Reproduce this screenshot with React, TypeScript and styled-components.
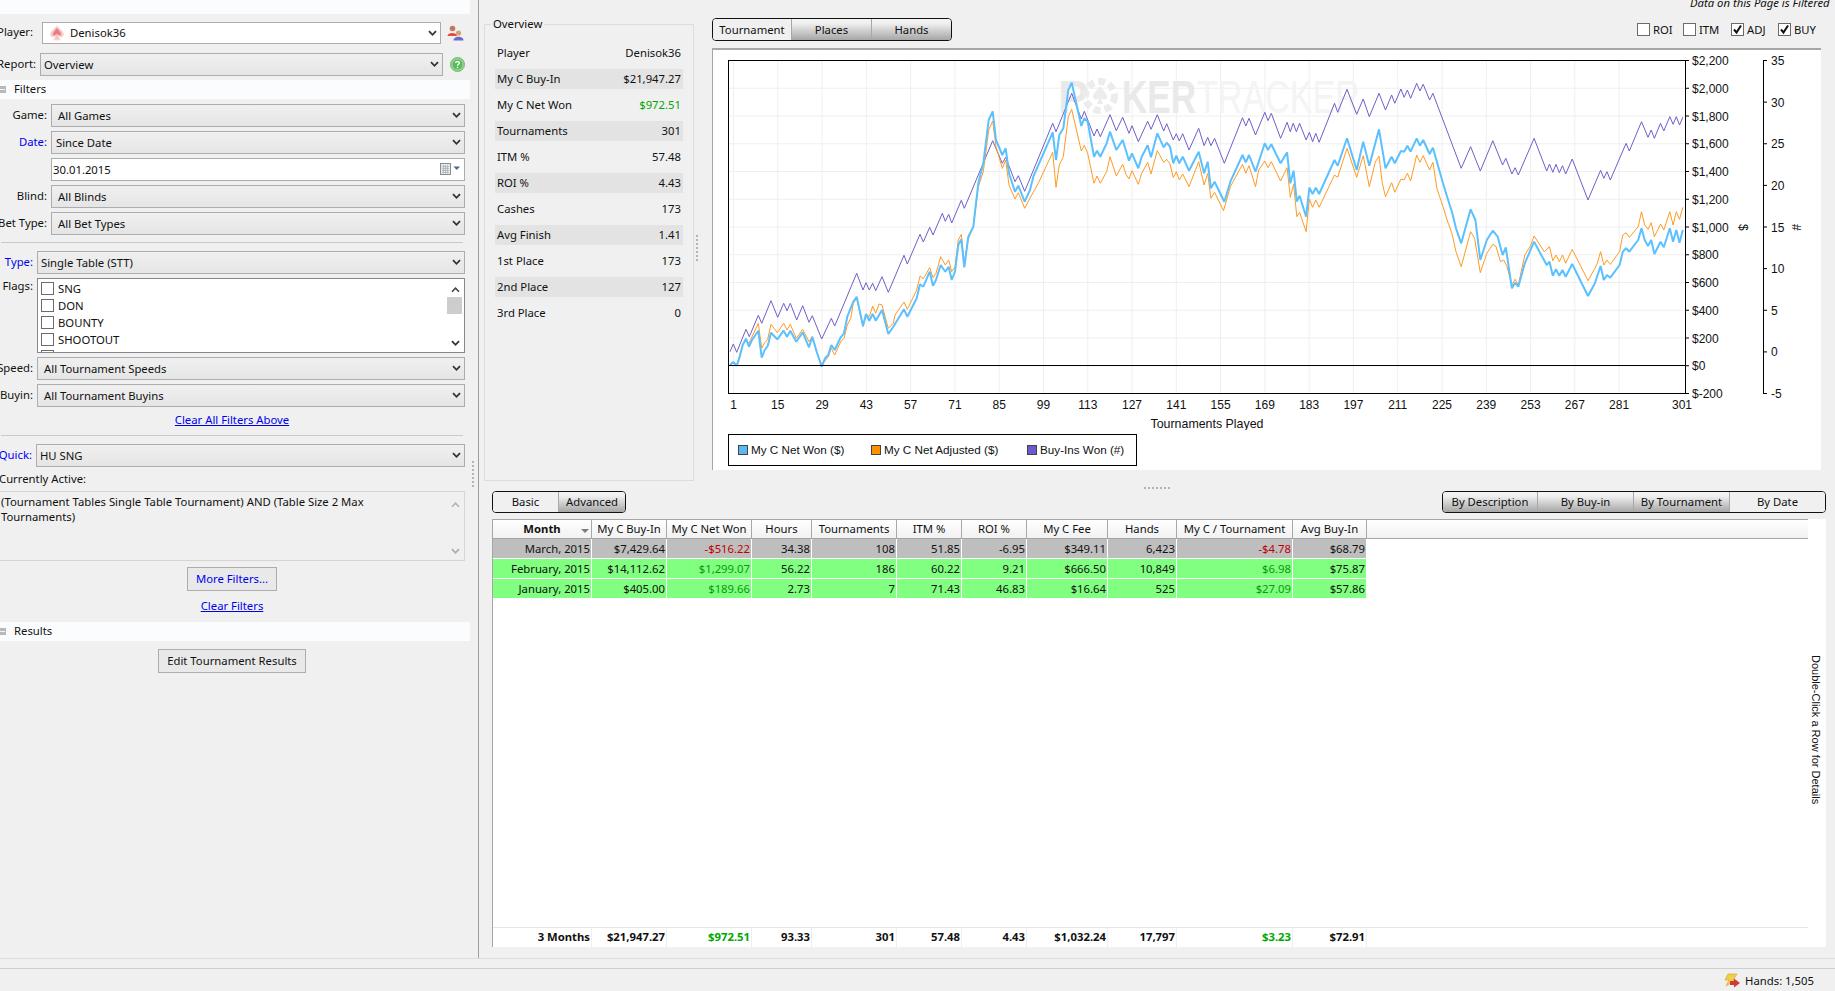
import React from 'react';
import styled, { createGlobalStyle } from 'styled-components';

const UI = '"Noto Sans", "Liberation Sans", sans-serif';
const CH = '"Liberation Sans", Arial, sans-serif';

const Global = createGlobalStyle`
  html, body { margin: 0; padding: 0; background: #f0f0f0; overflow: hidden; }
  * { box-sizing: border-box; }
`;

const Root = styled.div`
  width: 1835px; height: 991px; overflow: hidden; background: #f0f0f0; color: #111;
  font: 11.3px/14px ${UI}; display: flex; flex-direction: column;
`;
const Main = styled.div`display: flex; height: 958px;`;

/* ---------- left panel ---------- */
const Left = styled.aside`width: 470px; overflow: hidden; display: flex; flex-direction: column;`;
const TopStrip = styled.div`height: 14px; background: #fbfcfe;`;
const Row = styled.div<{ $top: number; $right?: number; $h?: number }>`
  display: flex; align-items: center; margin-top: ${p => p.$top}px; padding-right: ${p => p.$right ?? 5}px;
  height: ${p => p.$h ?? 23}px;
`;
const Label = styled.span<{ $w: number; $gap?: number; $blue?: boolean; $high?: boolean }>`
  flex: none; width: ${p => p.$w}px; margin-right: ${p => p.$gap ?? 4}px; display: flex; justify-content: flex-end; white-space: nowrap;
  color: ${p => (p.$blue ? '#0000ee' : '#111')}; position: relative; top: ${p => (p.$high ? 1 : -1)}px;
  align-self: ${p => (p.$high ? 'flex-start' : 'auto')};
`;
const Combo = styled.div<{ $white?: boolean; $pad?: number }>`
  flex: 1; height: 100%; min-width: 0; display: flex; align-items: center; justify-content: space-between;
  border: 1px solid #adadad; padding: 0 3px 0 ${p => p.$pad ?? 3}px;
  background: ${p => (p.$white ? '#fff' : 'linear-gradient(#f0f0f0, #e5e5e5)')};
`;
const ComboLead = styled.span`display: flex; align-items: center; gap: 6px;`;
const RowIcon = styled.span<{ $gap: number }>`flex: none; margin-left: ${p => p.$gap}px; display: flex;`;
const Chevron = () => (
  <svg width="9" height="7" viewBox="0 0 9 7"><path d="M1 1.2 L4.5 4.8 L8 1.2" fill="none" stroke="#333" strokeWidth="1.8" /></svg>
);
const Band = styled.div<{ $top: number }>`
  height: 19px; margin-top: ${p => p.$top}px; padding-bottom: 1px; background: #fbfcfe; display: flex; align-items: center; gap: 8px;
`;
const Minus = styled.span`
  width: 6px; height: 7px; background: #b9b9b9; display: flex; align-items: center;
  &::after { content: ''; width: 5px; height: 1px; background: #f4f4f4; }
`;
const Rule = styled.div<{ $top: number }>`height: 1px; margin: ${p => p.$top}px 7px 0 1px; background: #c9c9c9;`;
const FlagBox = styled.div`
  flex: 1; height: 100%; border: 1px solid #828790; background: #fff; display: flex; overflow: hidden;
`;
const FlagItems = styled.div`flex: 1; padding: 1px 0 0 3px;`;
const FlagItem = styled.div`height: 17px; display: flex; align-items: center; gap: 4px;`;
const Box = styled.span`
  flex: none; width: 13px; height: 13px; border: 1px solid #6b6b6b; background: #fff; display: inline-flex;
  align-items: center; justify-content: center;
`;
const Scroll = styled.div<{ $bg?: string; $dim?: boolean }>`
  width: 16px; margin-right: 1px; display: flex; flex-direction: column; align-items: center; justify-content: space-between;
  padding: 7px 0 5px; background: ${p => p.$bg ?? '#fff'}; position: relative; opacity: ${p => (p.$dim ? 0.35 : 1)};
`;
const Thumb = styled.span`position: absolute; top: 18px; left: 0; width: 15px; height: 17px; background: #cdcdcd;`;
const UpChevron = () => (
  <svg width="9" height="7" viewBox="0 0 9 7"><path d="M1 5.8 L4.5 2.2 L8 5.8" fill="none" stroke="#444" strokeWidth="1.6" /></svg>
);
const LinkLine = styled.div<{ $top: number }>`
  margin-top: ${p => p.$top}px; height: 14px; text-align: center; padding-right: 6px;
  color: #0000ee; text-decoration: underline;
`;
const PlainLabel = styled.div<{ $top: number }>`margin-top: ${p => p.$top}px; height: 14px; white-space: nowrap; margin-left: -1px;`;
const Active = styled.div`
  height: 70px; margin: 5px 5px 0 0; border: 1px solid #d5d5d5; border-left: 0; display: flex; background: #f0f0f0;
  padding: 2px 0 0 1px;
`;
const ActiveText = styled.div`flex: 1; padding-right: 40px; line-height: 15px;`;
const ButtonLine = styled.div<{ $top: number }>`margin-top: ${p => p.$top}px; display: flex; justify-content: center; padding-right: 6px;`;
const Button = styled.div<{ $w: number; $blue?: boolean }>`
  width: ${p => p.$w}px; height: 24px; border: 1px solid #adadad; background: #e9e9e9; display: flex; align-items: center;
  justify-content: center; color: ${p => (p.$blue ? '#0000ee' : '#111')};
`;

/* ---------- splitters ---------- */
const Splitter = styled.div`
  width: 9px; border-right: 1px solid #9c9c9c; padding: 461px 0 0 2px; flex: none;
`;
const DotsV = styled.div`width: 2px; height: 27px; background: repeating-linear-gradient(#b4b4b4 0 2px, transparent 2px 4px);`;
const DotsH = styled.div`width: 28px; height: 2px; background: repeating-linear-gradient(90deg, #b4b4b4 0 2px, transparent 2px 4px);`;

/* ---------- right side ---------- */
const Right = styled.div`flex: 1; min-width: 0; display: flex; flex-direction: column;`;
const TopArea = styled.div`height: 470px; display: flex;`;
const Overview = styled.fieldset`
  flex: none; width: 210px; height: 464px; margin: 17px 0 0 5px; padding: 12px 10px 0; border: 1px solid #dcdcdc;
  display: block; min-width: 0;
`;
const OverviewLegend = styled.legend`padding: 0 2px; margin-left: -4px; line-height: 14px;`;
const StatRow = styled.div<{ $shade?: boolean }>`
  height: 20px; margin-bottom: 6px; display: flex; justify-content: space-between; align-items: center; padding: 0 2px;
  background: ${p => (p.$shade ? '#e3e3e3' : 'transparent')};
`;
const StatValue = styled.span<{ $green?: boolean }>`color: ${p => (p.$green ? '#00a800' : '#111')};`;
const MidSash = styled.div`flex: none; width: 18px; padding: 235px 0 0 2px;`;
const ChartCol = styled.div`width: 1109px; flex: none; display: flex; flex-direction: column;`;
const Note = styled.div`
  height: 9px; line-height: 6px; margin-left: 978px; white-space: nowrap; font-style: italic;
`;
const ToolRow = styled.div`margin-top: 9px; height: 23px; display: flex; justify-content: space-between;`;
const Tabs = styled.div`
  display: flex; height: 23px; border: 1px solid #111; border-radius: 4px; overflow: hidden; flex: none;
`;
const Tab = styled.div<{ $w: number; $active?: boolean }>`
  width: ${p => p.$w}px; display: flex; align-items: center; justify-content: center; border-right: 1px solid #a8a8a8;
  &:last-child { border-right: 0; }
  background: ${p => (p.$active ? '#f0f0f0' : 'linear-gradient(#f4f4f4, #f0f0f0 20%, #a6a6a6)')};
`;
const Toggles = styled.div`display: flex; padding: 5px 5px 0 0; align-items: flex-start;`;
const Toggle = styled.label<{ $w: number }>`width: ${p => p.$w}px; display: flex; align-items: center; gap: 3px; height: 13px;`;
const Panel = styled.div`
  flex: 1; margin-top: 7px; background: #fff; border-top: 2px solid #a6a6a6; border-left: 1px solid #a6a6a6;
`;
const ChartSvg = styled.svg`display: block;`;
const LegendBox = styled.div`
  margin: 4px 0 0 15px; width: 409px; height: 32px; border: 1px solid #000; display: flex; align-items: center; padding-left: 9px;
  font: 11.7px/14px ${CH};
`;
const LegendItem = styled.div<{ $w: number }>`width: ${p => p.$w}px; display: flex; align-items: center; gap: 3px; white-space: nowrap;`;
const Swatch = styled.span<{ $c: string }>`width: 10px; height: 10px; border: 1px solid #444; background: ${p => p.$c}; flex: none;`;

const Lower = styled.div`flex: 1; display: flex; flex-direction: column; padding: 0 9px 11px 13px; min-height: 0;`;
const SashLine = styled.div`height: 21px; padding: 17px 0 0 652px;`;
const LowerTabs = styled.div`height: 22px; display: flex; justify-content: space-between;`;
const LowerTabsBar = styled(Tabs)`height: 22px;`;
const GridPanel = styled.div`
  margin-top: 6px; flex: 1; min-height: 0; background: #fff; border-left: 1px solid #a6a6a6; display: flex;
`;
const TableArea = styled.div`width: 1315px; display: flex; flex-direction: column;`;
const SideNote = styled.div`
  flex: 1; writing-mode: vertical-rl; padding-top: 136px; padding-right: 3px; white-space: nowrap; font: 11px/14px ${CH};
`;
const COLS = [99, 75, 85, 60, 85, 65, 65, 81, 69, 116, 74];
const HeadRow = styled.div`
  display: flex; height: 20px; border-top: 1px solid #a6a6a6; border-bottom: 1px solid #a6a6a6;
  background: linear-gradient(#fff, #f1f1f1);
`;
const HeadCell = styled.div<{ $w: number; $bold?: boolean }>`
  position: relative; flex: none; width: ${p => p.$w}px; display: flex; align-items: center; justify-content: center;
  white-space: nowrap; border-right: 1px solid #a8a8a8; font-weight: ${p => (p.$bold ? 700 : 400)};
`;
const SortMark = styled.span`
  position: absolute; right: 2px; top: 9px; border: 4px solid transparent; border-top: 4px solid #7c7c7c; border-bottom: 0;
`;
const DataRow = styled.div<{ $bg: string }>`display: flex; height: 20px; border-bottom: 1px solid #fff; width: 874px; background: ${p => p.$bg};`;
const Cell = styled.div<{ $w: number; $c?: string }>`
  flex: none; width: ${p => p.$w}px; text-align: right; padding-right: 1px; border-right: 1px solid #fff; line-height: 19px;
  white-space: nowrap; color: ${p => p.$c ?? '#111'};
`;
const FootRow = styled.div`margin-top: auto; height: 20px; display: flex; border-top: 1px solid #e6e6e6;`;
const FootCell = styled.div<{ $w: number; $c?: string }>`
  flex: none; width: ${p => p.$w}px; text-align: right; padding-right: 1px; border-right: 1px solid #efefef; line-height: 17px;
  font-weight: 700; white-space: nowrap; color: ${p => p.$c ?? '#111'};
`;

const StatusLines = styled.div`height: 11px; border-top: 1px solid #dcdcdc; border-bottom: 1px solid #cfcfcf; background: #f0f0f0;`;
const Status = styled.div`flex: 1; display: flex; justify-content: flex-end; align-items: center; gap: 4px; padding: 1px 21px 0 0;`;

/* ---------- icons ---------- */
const Spade = () => (
  <svg width="14" height="16" viewBox="0 0 14 16">
    <path d="M7 0.5 C9 4 13.5 6 13.5 9.5 C13.5 12 10.5 12.8 8.6 11 C8.8 12.8 9.5 14 10.6 15 L3.4 15 C4.5 14 5.2 12.8 5.4 11 C3.5 12.8 0.5 12 0.5 9.5 C0.5 6 5 4 7 0.5 Z" fill="#f6c4c4" stroke="#fae2e2" />
    <path d="M7 3 C8.5 5.5 11 7 11 9.2 C11 10.8 8.8 10.6 7 8.8 C5.2 10.6 3 10.8 3 9.2 C3 7 5.5 5.5 7 3 Z" fill="#ea7c7c" />
  </svg>
);
const People = () => (
  <svg width="17" height="16" viewBox="0 0 17 16">
    <circle cx="5.5" cy="3.5" r="2.8" fill="#c47a5a" />
    <path d="M0.5 11 C0.5 7 10 7 10 11 Z" fill="#e04a40" />
    <circle cx="11.5" cy="8" r="2.6" fill="#d9a070" />
    <path d="M6.5 15.5 C6.5 10.5 16.5 10.5 16.5 15.5 Z" fill="#6a6ad0" />
  </svg>
);
const Help = () => (
  <svg width="15" height="15" viewBox="0 0 15 15">
    <circle cx="7.5" cy="7.5" r="7" fill="#8fd08f" stroke="#6fbf6f" />
    <circle cx="7.5" cy="7.5" r="4.8" fill="#5cb85c" />
    <path d="M5.6 6 C5.8 4 9.4 4 9.4 6 C9.4 7.4 7.5 7.2 7.5 8.8" fill="none" stroke="#fff" strokeWidth="1.4" />
    <rect x="6.8" y="9.8" width="1.4" height="1.4" fill="#fff" />
  </svg>
);
const DatePick = () => (
  <svg width="21" height="13" viewBox="0 0 21 13">
    <rect x="0.5" y="0.5" width="10" height="11" fill="#e4e8ec" stroke="#8a8f96" />
    <path d="M2 3.5h7M2 5.5h7M2 7.5h7M2 9.5h7M3.5 2v8.5M5.5 2v8.5M7.5 2v8.5" stroke="#a9b0b8" strokeWidth="0.7" />
    <path d="M13.5 3.5 L20 3.5 L16.75 7 Z" fill="#4a6a94" />
  </svg>
);
const Check = () => (
  <svg width="11" height="11" viewBox="0 0 11 11"><path d="M2 5.5 L4.5 8.5 L9 1.5" fill="none" stroke="#111" strokeWidth="2" /></svg>
);
const Bolt = () => (
  <svg width="17" height="16" viewBox="0 0 17 16">
    <path d="M4 1 L13 1 L9 7 L11 7 L2 13 L5 7 L1 7 Z" fill="#f2cf4a" stroke="#d9a62a" strokeWidth="0.7" />
    <path d="M6 8 L10 8 L10 5.5 L16 10 L10 14.5 L10 12 L6 12 Z" fill="#d13a35" />
  </svg>
);

/* ---------- chart data, traced in full-size pixels via two reference crops ---------- */
const parse = (s: string, ox: number, oy: number, sx: number) =>
  s.trim().split(/\s+/).map(p => {
    const [x, y] = p.split(',').map(Number);
    return `${(ox + x / sx).toFixed(1)},${(oy + y / 3).toFixed(1)}`;
  });
const line = (a: string, b: string) => [...parse(a, 720, 40, 3), ...parse(b, 1200, 0, 2.469)].join(' ');

const PURPLE = line(
  '30,935 40,912 50,937 78,868 88,890 115,826 125,850 153,782 173,832 191,790 201,812 211,790 230,840 248,797 267,847 277,827 305,897 334,835 344,858 410,700 429,750 438,728 448,750 458,730 467,752 486,710 505,757 552,646 562,672 600,583 610,606 629,562 639,585 667,520 676,544 686,523 695,549 724,481 733,505 818,302 847,370 857,352 885,425 895,407 914,454 998,250 1008,275 1055,160 1084,237 1093,214 1122,288 1131,267 1141,290 1170,224 1189,272 1208,232 1227,280 1236,257 1255,305 1283,244 1293,268 1312,224 1331,273 1340,251 1360,300 1369,281 1378,303 1388,281 1407,330 1436,265',
  '10,437 19,412 27,437 36,415 60,490 105,353 113,378 121,355 137,405 160,337 168,362 176,340 199,415 215,367 223,395 230,370 238,395 246,370 262,420 270,397 278,425 286,400 294,427 332,310 340,337 363,268 387,343 403,297 418,350 442,280 458,330 473,285 481,310 496,267 504,292 512,270 520,295 535,250 543,273 551,253 567,300 575,280 645,505 668,440 692,513 723,422 747,495 755,475 770,522 778,503 786,525 825,415 856,513 863,492 871,517 879,493 887,518 895,497 903,522 919,477 958,600 989,511 997,535 1005,515 1013,540 1052,430 1060,453 1090,365 1106,412 1114,390 1122,415 1137,370 1145,393 1160,350 1168,373 1176,350 1184,375 1192,352'
);
const BLUE = line(
  '30,975 40,966 50,977 58,955 68,915 78,896 87,920 96,900 115,872 125,953 134,930 143,918 153,878 172,898 191,872 201,890 211,872 229,905 248,877 267,922 277,890 290,935 305,980 315,955 325,945 334,915 344,930 362,892 372,880 382,830 400,785 410,770 429,858 438,822 448,842 458,822 467,842 486,810 505,882 520,860 552,808 562,830 590,775 600,733 610,740 629,695 639,737 648,720 662,675 676,695 686,680 695,720 705,695 715,615 724,598 733,682 745,590 760,560 775,430 790,370 806,240 818,214 828,300 847,345 857,325 867,400 885,455 895,437 914,485 930,450 940,410 998,277 1008,360 1018,285 1030,265 1045,150 1055,128 1084,258 1093,235 1103,245 1122,350 1131,332 1141,350 1160,310 1170,275 1189,330 1208,300 1227,362 1236,340 1255,385 1265,350 1283,316 1293,352 1312,280 1331,322 1340,308 1350,320 1360,370 1369,347 1378,370 1388,350 1407,392 1436,335',
  '10,520 19,485 27,565 36,545 60,605 75,545 105,465 113,487 121,465 137,515 160,430 168,450 176,433 199,490 215,457 223,550 231,512 239,605 246,587 262,650 270,563 278,582 286,563 294,582 332,480 340,497 363,415 387,510 403,425 418,497 442,388 458,505 473,470 481,490 496,453 504,455 512,437 520,455 535,415 543,437 551,420 567,462 575,443 600,550 610,590 622,635 632,685 645,730 668,628 680,660 692,780 708,720 723,692 735,710 747,765 755,742 770,865 778,848 786,860 802,790 825,725 856,795 863,785 871,827 879,808 887,827 895,810 903,830 919,792 958,888 975,850 989,798 997,840 1005,825 1013,833 1036,795 1044,755 1052,745 1060,755 1082,720 1090,685 1098,720 1106,738 1114,720 1122,762 1137,725 1145,742 1160,685 1168,725 1176,690 1184,728 1192,690'
);
const ORANGE = line(
  '30,975 40,968 50,975 58,950 68,915 78,900 87,910 115,850 125,925 134,908 143,898 153,853 172,878 191,850 201,870 211,853 229,895 248,868 267,905 277,890 290,935 305,975 325,950 334,925 344,945 362,905 372,895 382,855 392,835 400,790 410,775 429,860 438,822 448,830 458,798 467,820 477,792 486,795 505,865 520,850 525,825 552,786 562,808 590,750 600,708 610,716 629,683 639,713 648,700 662,650 676,675 686,660 695,695 705,680 715,600 724,583 733,670 745,597 760,560 775,440 790,395 806,270 818,243 828,320 847,385 857,360 867,435 885,477 895,458 914,505 935,465 955,430 998,337 1008,442 1018,375 1030,350 1045,230 1055,208 1084,333 1093,316 1103,340 1122,430 1131,408 1141,430 1160,395 1170,350 1189,408 1208,373 1218,403 1227,417 1236,392 1255,433 1265,400 1283,367 1293,402 1312,332 1331,367 1340,358 1350,372 1360,413 1369,395 1378,420 1388,402 1407,440 1436,365',
  '10,555 19,520 27,595 36,577 58,632 75,560 105,493 113,520 121,497 137,560 145,510 160,483 168,503 176,485 199,543 215,503 223,592 231,553 239,650 246,637 262,695 270,597 278,622 286,600 294,622 332,525 340,532 363,445 387,532 403,467 418,560 433,485 442,468 450,550 458,590 473,548 481,577 496,537 504,540 512,520 520,543 535,465 543,487 551,467 567,510 575,487 585,565 600,620 610,660 622,700 632,755 645,800 668,695 678,715 692,818 708,760 723,733 731,740 742,785 750,780 758,800 770,855 778,838 786,855 802,765 815,740 825,708 850,755 863,740 871,782 879,765 887,785 895,765 903,790 919,748 958,842 975,805 981,790 989,755 997,795 1005,780 1013,793 1036,755 1044,705 1052,698 1060,712 1082,680 1090,635 1098,675 1106,688 1114,668 1122,710 1137,672 1145,690 1160,635 1168,675 1176,635 1184,658 1192,622'
);

const xOf = (n: number) => 733.5 + (n - 1) * 3.163;
const xTicks: number[] = [];
for (let n = 1; n <= 281; n += 14) xTicks.push(n);
const usd = ['$2,200', '$2,000', '$1,800', '$1,600', '$1,400', '$1,200', '$1,000', '$800', '$600', '$400', '$200', '$0', '$-200'];
const buy = ['35', '30', '25', '20', '15', '10', '5', '0', '-5'];

const Chart = () => (
  <ChartSvg width={1108} height={380} viewBox="713 50 1108 380" fontFamily={CH} fontSize="12" fill="#111">
    {xTicks.map(n => <line key={n} x1={xOf(n)} x2={xOf(n)} y1={60} y2={393} stroke="#efefef" />)}
    {usd.map((_, i) => <line key={i} x1={728} x2={1685} y1={60.5 + i * 27.75} y2={60.5 + i * 27.75} stroke="#efefef" />)}
    <g>
      <text x={1058} y={113} fontSize="46" fontWeight="700" fill="#e9e9e9">P</text>
      <circle cx={1100} cy={96} r={14.5} fill="none" stroke="#ececec" strokeWidth="7" strokeDasharray="7 4" />
      <path d="M1100 86 C1103 91 1107 93 1107 97 C1107 100 1103 100 1101 98 L1103 104 L1097 104 L1099 98 C1097 100 1093 100 1093 97 C1093 93 1097 91 1100 86 Z" fill="#ececec" />
      <text x={1122} y={113} fontSize="46" fontWeight="700" fill="#e9e9e9" textLength={74} lengthAdjust="spacingAndGlyphs">KER</text>
      <text x={1197} y={113} fontSize="46" fill="#f4f4f4" textLength={163} lengthAdjust="spacingAndGlyphs">TRACKER</text>
    </g>
    <polyline points={PURPLE} fill="none" stroke="#6f5fc8" strokeWidth="1" />
    <polyline points={ORANGE} fill="none" stroke="#ff9a22" strokeWidth="1" />
    <polyline points={BLUE} fill="none" stroke="#5cc0ff" strokeWidth="2" strokeLinejoin="bevel" />
    <rect x={728.5} y={60.5} width={957} height={333} fill="none" stroke="#000" />
    <line x1={728} x2={1685} y1={365.5} y2={365.5} stroke="#000" />
    {usd.map((t, i) => {
      const y = 60.5 + i * 27.75;
      return (
        <g key={t}>
          <line x1={1685} x2={1689} y1={y} y2={y} stroke="#000" />
          <text x={1692} y={y + 4.5}>{t}</text>
        </g>
      );
    })}
    <line x1={1763.5} x2={1763.5} y1={60} y2={393.5} stroke="#000" />
    {buy.map((t, i) => {
      const y = 60.5 + i * 41.63;
      return (
        <g key={t}>
          <line x1={1763} x2={1767} y1={y} y2={y} stroke="#000" />
          <text x={1771} y={y + 4.5}>{t}</text>
        </g>
      );
    })}
    <text transform="translate(1739 224) rotate(90)" fontSize="12">$</text>
    <text transform="translate(1792 224) rotate(90)" fontSize="12">#</text>
    {xTicks.map(n => <text key={n} x={xOf(n)} y={409} textAnchor="middle">{n}</text>)}
    <text x={1682} y={409} textAnchor="middle">301</text>
    <text x={1207} y={428} textAnchor="middle" fontSize="12.4">Tournaments Played</text>
  </ChartSvg>
);

const stats: [string, string, boolean?][] = [
  ['Player', 'Denisok36'], ['My C Buy-In', '$21,947.27'], ['My C Net Won', '$972.51', true], ['Tournaments', '301'],
  ['ITM %', '57.48'], ['ROI %', '4.43'], ['Cashes', '173'], ['Avg Finish', '1.41'], ['1st Place', '173'], ['2nd Place', '127'], ['3rd Place', '0'],
];
const heads = ['Month', 'My C Buy-In', 'My C Net Won', 'Hours', 'Tournaments', 'ITM %', 'ROI %', 'My C Fee', 'Hands', 'My C / Tournament', 'Avg Buy-In'];
const RED = '#c00000';
const GRN = '#0a9a0a';
const rows = [
  { bg: '#bebebe', c: RED, v: ['March, 2015', '$7,429.64', '-$516.22', '34.38', '108', '51.85', '-6.95', '$349.11', '6,423', '-$4.78', '$68.79'] },
  { bg: '#80ff80', c: GRN, v: ['February, 2015', '$14,112.62', '$1,299.07', '56.22', '186', '60.22', '9.21', '$666.50', '10,849', '$6.98', '$75.87'] },
  { bg: '#80ff80', c: GRN, v: ['January, 2015', '$405.00', '$189.66', '2.73', '7', '71.43', '46.83', '$16.64', '525', '$27.09', '$57.86'] },
];
const foot = ['3 Months', '$21,947.27', '$972.51', '93.33', '301', '57.48', '4.43', '$1,032.24', '17,797', '$3.23', '$72.91'];
const colored = (i: number) => i === 2 || i === 9;

export default function App() {
  return (
    <Root>
      <Global />
      <Main>
        <Left>
          <TopStrip />
          <Row $top={8} $h={22} $right={6}>
            <Label $w={33} $gap={9}>Player:</Label>
            <Combo $white $pad={7}>
              <ComboLead><Spade />Denisok36</ComboLead>
              <Chevron />
            </Combo>
            <RowIcon $gap={6}><People /></RowIcon>
          </Row>
          <Row $top={9}>
            <Label $w={36}>Report:</Label>
            <Combo><span>Overview</span><Chevron /></Combo>
            <RowIcon $gap={7}><Help /></RowIcon>
          </Row>
          <Band $top={4}><Minus />Filters</Band>
          <Row $top={5}><Label $w={47}>Game:</Label><Combo $pad={6}><span>All Games</span><Chevron /></Combo></Row>
          <Row $top={4}><Label $w={47} $blue>Date:</Label><Combo $pad={4}><span>Since Date</span><Chevron /></Combo></Row>
          <Row $top={4}>
            <Label $w={47} />
            <Combo $white $pad={1}><span>30.01.2015</span><DatePick /></Combo>
          </Row>
          <Row $top={4}><Label $w={47}>Blind:</Label><Combo $pad={6}><span>All Blinds</span><Chevron /></Combo></Row>
          <Row $top={4}><Label $w={47}>Bet Type:</Label><Combo $pad={6}><span>All Bet Types</span><Chevron /></Combo></Row>
          <Rule $top={7} />
          <Row $top={8}><Label $w={33} $blue>Type:</Label><Combo><span>Single Table (STT)</span><Chevron /></Combo></Row>
          <Row $top={4} $h={75}>
            <Label $w={33} $high>Flags:</Label>
            <FlagBox>
              <FlagItems>
                {['SNG', 'DON', 'BOUNTY', 'SHOOTOUT'].map(f => <FlagItem key={f}><Box />{f}</FlagItem>)}
                <FlagItem><Box /></FlagItem>
              </FlagItems>
              <Scroll><UpChevron /><Thumb /><Chevron /></Scroll>
            </FlagBox>
          </Row>
          <Row $top={4}><Label $w={33}>Speed:</Label><Combo $pad={6}><span>All Tournament Speeds</span><Chevron /></Combo></Row>
          <Row $top={4}><Label $w={33}>Buyin:</Label><Combo $pad={6}><span>All Tournament Buyins</span><Chevron /></Combo></Row>
          <LinkLine $top={6}>Clear All Filters Above</LinkLine>
          <Rule $top={8} />
          <Row $top={8}><Label $w={32} $blue>Quick:</Label><Combo><span>HU SNG</span><Chevron /></Combo></Row>
          <PlainLabel $top={5}>Currently Active:</PlainLabel>
          <Active>
            <ActiveText>(Tournament Tables Single Table Tournament) AND (Table Size 2 Max Tournaments)</ActiveText>
            <Scroll $bg="#f0f0f0" $dim><UpChevron /><Chevron /></Scroll>
          </Active>
          <ButtonLine $top={6}><Button $w={90} $blue>More Filters...</Button></ButtonLine>
          <LinkLine $top={8}>Clear Filters</LinkLine>
          <Band $top={9}><Minus />Results</Band>
          <ButtonLine $top={8}><Button $w={148}>Edit Tournament Results</Button></ButtonLine>
        </Left>
        <Splitter><DotsV /></Splitter>
        <Right>
          <TopArea>
            <Overview>
              <OverviewLegend>Overview</OverviewLegend>
              {stats.map(([k, v, g], i) => (
                <StatRow key={k} $shade={i % 2 === 1}><span>{k}</span><StatValue $green={g}>{v}</StatValue></StatRow>
              ))}
            </Overview>
            <MidSash><DotsV /></MidSash>
            <ChartCol>
              <Note>Data on this Page is Filtered</Note>
              <ToolRow>
                <Tabs>
                  <Tab $w={79} $active>Tournament</Tab>
                  <Tab $w={80}>Places</Tab>
                  <Tab $w={79}>Hands</Tab>
                </Tabs>
                <Toggles>
                  <Toggle $w={46}><Box />ROI</Toggle>
                  <Toggle $w={48}><Box />ITM</Toggle>
                  <Toggle $w={47}><Box><Check /></Box>ADJ</Toggle>
                  <Toggle $w={38}><Box><Check /></Box>BUY</Toggle>
                </Toggles>
              </ToolRow>
              <Panel>
                <Chart />
                <LegendBox>
                  <LegendItem $w={133}><Swatch $c="#5cb8f5" />My C Net Won ($)</LegendItem>
                  <LegendItem $w={156}><Swatch $c="#ff9000" />My C Net Adjusted ($)</LegendItem>
                  <LegendItem $w={100}><Swatch $c="#6a5acd" />Buy-Ins Won (#)</LegendItem>
                </LegendBox>
              </Panel>
            </ChartCol>
          </TopArea>
          <Lower>
            <SashLine><DotsH /></SashLine>
            <LowerTabs>
              <LowerTabsBar>
                <Tab $w={66} $active>Basic</Tab>
                <Tab $w={66}>Advanced</Tab>
              </LowerTabsBar>
              <LowerTabsBar>
                <Tab $w={95}>By Description</Tab>
                <Tab $w={96}>By Buy-in</Tab>
                <Tab $w={96}>By Tournament</Tab>
                <Tab $w={95} $active>By Date</Tab>
              </LowerTabsBar>
            </LowerTabs>
            <GridPanel>
              <TableArea>
                <HeadRow>
                  {heads.map((h, i) => (
                    <HeadCell key={h} $w={COLS[i]} $bold={i === 0}>{h}{i === 0 && <SortMark />}</HeadCell>
                  ))}
                </HeadRow>
                {rows.map(r => (
                  <DataRow key={r.v[0]} $bg={r.bg}>
                    {r.v.map((v, i) => <Cell key={i} $w={COLS[i]} $c={colored(i) ? r.c : undefined}>{v}</Cell>)}
                  </DataRow>
                ))}
                <FootRow>
                  {COLS.map((w, i) => (
                    <FootCell key={i} $w={w} $c={colored(i) ? '#00a800' : undefined}>{foot[i]}</FootCell>
                  ))}
                </FootRow>
              </TableArea>
              <SideNote>Double-Click a Row for Details</SideNote>
            </GridPanel>
          </Lower>
        </Right>
      </Main>
      <StatusLines />
      <Status><Bolt /><span>Hands: 1,505</span></Status>
    </Root>
  );
}
